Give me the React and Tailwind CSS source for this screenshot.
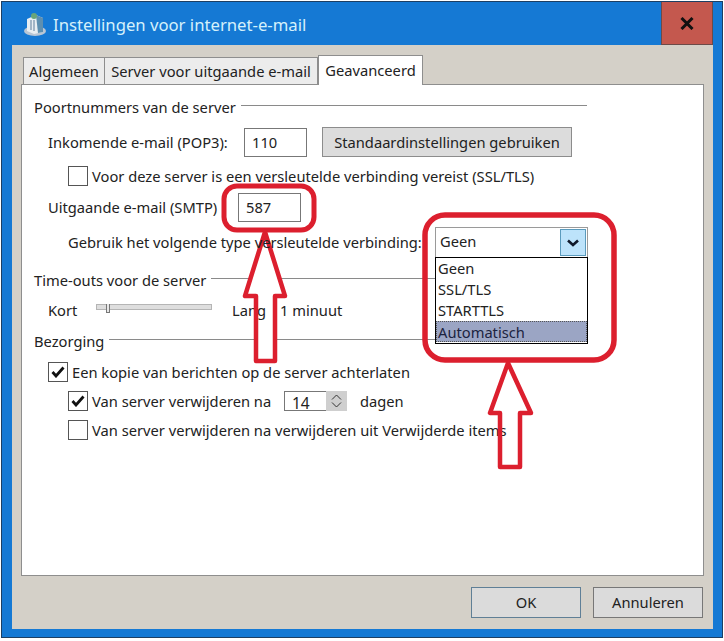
const annotations = (
  <svg className="absolute left-0 top-0 pointer-events-none" width="724" height="641" viewBox="0 0 724 641" fill="none">
    {/* someone erased the group lines inside the first arrow */}
    <rect x="250" y="276" width="30" height="4" fill="#fff" />
    <rect x="258" y="338" width="16" height="4" fill="#fff" />
    <rect x="224" y="186" width="90" height="44" rx="13" stroke="#dc1f2e" strokeWidth="5" />
    <path d="M265 232 L245 296 L256 296 L256 361 L275 361 L275 296 L285 296 Z" stroke="#dc1f2e" strokeWidth="4.5" strokeLinejoin="round" />
    <rect x="425" y="215" width="189" height="145" rx="20" stroke="#dc1f2e" strokeWidth="5.5" />
    <path d="M508 363 L490 413 L500 413 L500 467 L520 467 L520 413 L531 413 Z" stroke="#dc1f2e" strokeWidth="4.5" strokeLinejoin="round" />
  </svg>
)

function MailIcon() {
  return (
    <svg width="24" height="26" viewBox="0 0 24 26">
      <ellipse cx="12" cy="20" rx="11" ry="5" fill="#b9c6d4" />
      <path d="M4 8 L13 4 L20 7 L20 21 L11 23 L4 20 Z" fill="#e8eef2" />
      <path d="M13 4 L20 7 L20 21 L15 22 Z" fill="#5d8fb0" />
      <path d="M8 9 v10 M11 9 v11" stroke="#8ba3b8" strokeWidth="1.5" />
      <circle cx="11" cy="5" r="3" fill="#6aa57a" />
    </svg>
  )
}

function Check() {
  return (
    <svg width="14" height="12" viewBox="0 0 14 12" fill="none">
      <path d="M1.5 6 L5 10 L12.5 1.5" stroke="#111" strokeWidth="2.8" />
    </svg>
  )
}

function Checkbox({ checked, label, className, labelWidth }) {
  return (
    <div className={`flex items-center gap-[4px] h-[20px] ${className}`}>
      <span className="w-[20px] h-[20px] border border-[#555] bg-white flex items-center justify-center shrink-0">
        {checked && <Check />}
      </span>
      <span className="whitespace-nowrap" style={{ width: labelWidth }}>{label}</span>
    </div>
  )
}

function GroupTitle({ title, lineWidth, className }) {
  return (
    <div className={`flex items-center h-[20px] gap-[5px] ${className}`}>
      <span className="whitespace-nowrap pb-[2px]">{title}</span>
      <span className="h-px bg-[#8a8a8a] mb-[5px]" style={{ width: lineWidth }} />
    </div>
  )
}

export default function App() {
  return (
    <div className="relative w-[724px] h-[641px] bg-white overflow-hidden font-['Noto_Sans','Open_Sans',sans-serif] text-[14.7px] text-[#222]">
      <div className="mx-px mt-px h-[637px] bg-[#1579d4] border border-[#1d3f63] flex flex-col">
        <div className="h-[43px] flex items-start shrink-0">
          <div className="pl-[21px] pt-[9px]"><MailIcon /></div>
          <span className="ml-[6px] mt-[10px] text-[16.7px] leading-[26px] text-[#d5f1fb]">Instellingen voor internet-e-mail</span>
          <div className="ml-auto mr-[9px] w-[52px] h-[43px] bg-[#c4584e] border border-[#6d4a48] border-t-0 flex items-center justify-center text-[#111]">
            <svg width="14" height="13" viewBox="0 0 14 13"><path d="M1.5 1 L12.5 12 M12.5 1 L1.5 12" stroke="#111" strokeWidth="3" /></svg>
          </div>
        </div>

        <div className="ml-[10px] mr-[9px] h-[584px] bg-[#d4d0c8] flex flex-col px-[9px] pt-[10px]">
          <div className="flex items-end h-[29px] relative z-10 pl-[2px]">
            <div className="h-[27px] w-[82px] bg-[#ececec] border border-[#8e8e8e] border-b-0 flex items-center justify-center">Algemeen</div>
            <div className="h-[27px] w-[213px] bg-[#ececec] border border-[#8e8e8e] border-b-0 border-l-0 flex items-center justify-center whitespace-nowrap">Server voor uitgaande e-mail</div>
            <div className="h-[30px] w-[105px] -mb-px bg-white border border-[#8e8e8e] border-b-0 flex items-center justify-center -mt-px">Geavanceerd</div>
          </div>

          <div className="h-[492px] bg-white border border-[#8e8e8e] pl-[12px] pt-[13px] shrink-0">
            <GroupTitle title="Poortnummers van de server" lineWidth="346px" />

            <div className="flex items-center h-[30px] mt-[9px] pl-[14px]">
              <span className="w-[196px] whitespace-nowrap">Inkomende e-mail (POP3):</span>
              <span className="w-[63px] h-[29px] border border-[#777] pl-[7px] flex items-center">110</span>
              <button className="ml-[15px] w-[250px] h-[30px] bg-[#dcdcdc] border border-[#8c8c8c] whitespace-nowrap">Standaardinstellingen gebruiken</button>
            </div>

            <Checkbox className="mt-[9px] ml-[34px]" label="Voor deze server is een versleutelde verbinding vereist (SSL/TLS)" />

            <div className="flex items-center h-[29px] mt-[7px] pl-[14px]">
              <span className="w-[190px] whitespace-nowrap">Uitgaande e-mail (SMTP)</span>
              <span className="w-[63px] h-[29px] border border-[#777] pl-[7px] flex items-center">587</span>
            </div>

            <div className="flex items-center h-[31px] mt-[5px] pl-[34px] relative z-10">
              <span className="w-[367px] whitespace-nowrap">Gebruik het volgende type versleutelde verbinding:</span>
              <div className="relative w-[153px] h-[31px] border border-[#9a9a9a] bg-white pl-[4px] pb-[2px] flex items-center">
                Geen
                <span className="absolute right-px top-px w-[26px] h-[27px] bg-[#bde3fb] border border-[#5b9bbd] flex items-center justify-center">
                  <svg width="12" height="8" viewBox="0 0 12 8" fill="none"><path d="M1 1.5 L6 6 L11 1.5" stroke="#10182a" strokeWidth="2.6" /></svg>
                </span>
                <div className="absolute left-[-1px] top-[29px] w-[153px] h-[87px] border border-black bg-white flex flex-col leading-[21px] pl-px">
                  <span className="h-[21px] pl-px">Geen</span>
                  <span className="h-[21px] pl-px">SSL/TLS</span>
                  <span className="h-[21px] pl-px">STARTTLS</span>
                  <span className="h-[21px] pl-px -ml-px bg-[#9ba5c4] border border-dotted border-[#555] leading-[20px] text-[#1c2340]">Automatisch</span>
                </div>
              </div>
            </div>

            <GroupTitle className="mt-[13px]" title="Time-outs voor de server" lineWidth="374px" />

            <div className="flex items-center h-[20px] mt-[9px] pl-[14px]">
              <span className="w-[48px]">Kort</span>
              <span className="relative w-[116px] h-[6px] bg-[#dedede] border border-[#b5b5b5] mb-[6px]">
                <span className="absolute left-[9px] -top-px w-[4px] h-[9px] bg-[#e8e8e8] border border-[#777] border-t-0" />
              </span>
              <span className="ml-[20px] w-[48px]">Lang</span>
              <span className="whitespace-nowrap">1 minuut</span>
            </div>

            <GroupTitle className="mt-[12px]" title="Bezorging" lineWidth="326px" />

            <Checkbox checked className="mt-[10px] ml-[14px]" label="Een kopie van berichten op de server achterlaten" />

            <div className="flex items-center h-[20px] mt-[9px] ml-[34px]">
              <Checkbox checked labelWidth="179px" label="Van server verwijderen na" />
              <span className="ml-[13px] w-[63px] h-[20px] border border-[#777] flex">
                <span className="flex-1 pl-[7px] leading-[22px] text-[15.5px]">14</span>
                <span className="w-[21px] -my-px -mr-px bg-[#cfcfcf] flex flex-col items-center justify-center gap-[2px]">
                  <svg width="11" height="6" viewBox="0 0 11 6" fill="none"><path d="M1 5.5 L5.5 1 L10 5.5" stroke="#333" /></svg>
                  <svg width="11" height="6" viewBox="0 0 11 6" fill="none"><path d="M1 0.5 L5.5 5 L10 0.5" stroke="#333" /></svg>
                </span>
              </span>
              <span className="ml-[13px]">dagen</span>
            </div>

            <Checkbox className="mt-[9px] ml-[34px]" label="Van server verwijderen na verwijderen uit Verwijderde items" />
          </div>

          <div className="flex justify-end gap-[12px] mt-[11px] mr-px">
            <button className="w-[110px] h-[31px] bg-[#dbdbdb] border border-[#5f7f96]">OK</button>
            <button className="w-[110px] h-[31px] bg-[#dbdbdb] border border-[#777]">Annuleren</button>
          </div>
        </div>
      </div>
      {annotations}
    </div>
  )
}
